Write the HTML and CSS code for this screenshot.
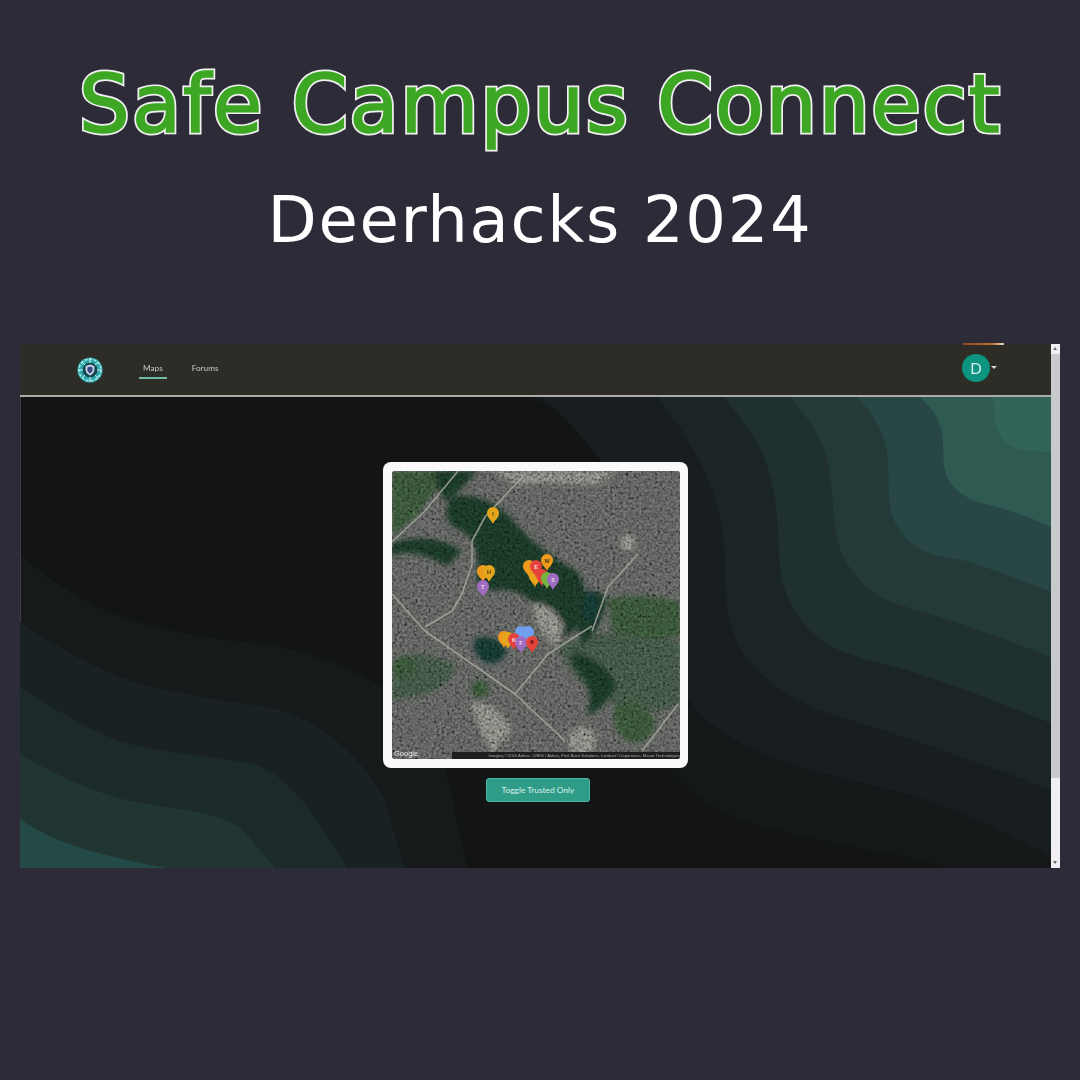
FILE: index.html
```html
<!DOCTYPE html>
<html lang="en">
<head>
<meta charset="utf-8">
<title>Safe Campus Connect</title>
<link rel="stylesheet" href="styles.css">
</head>
<body>
<header class="hero">
  <h1 class="title" data-text="Safe Campus Connect">Safe Campus Connect</h1>
  <h2 class="subtitle">Deerhacks 2024</h2>
</header>
<section class="window">
  <span class="sliver"></span>
  <div class="page">
    <nav class="nav">
      <svg class="logo" viewBox="0 0 26 26" aria-hidden="true">
        <circle cx="13" cy="13" r="12.6" fill="#2fa9ad"/>
        <circle cx="13" cy="13" r="11" fill="none" stroke="#bdeeee" stroke-width="1.3" stroke-dasharray="3 1.6"/>
        <circle cx="13" cy="13" r="7.6" fill="#15484f"/>
        <path d="M13 1.5V6M13 20v4.5M1.5 13H6M20 13h4.500M5 5l3 3M18 18l3 3M21 5l-3 3M8 18l-3 3" stroke="#d2f4f2" stroke-width="1"/>
        <path d="M13 7.400l4.400 1.600v3.600c0 3-2 4.900-4.400 6-2.400-1.100-4.400-3-4.400-6V9z" fill="#c9cfe6"/>
        <path d="M13 9.400l2.600 1v2.300c0 1.800-1.200 3-2.600 3.700-1.400-.7-2.600-1.900-2.600-3.700v-2.300z" fill="#3f4a82"/>
      </svg>
      <div class="links">
        <a class="link active">Maps</a>
        <a class="link">Forums</a>
      </div>
      <div class="account">
        <span class="avatar">D</span>
        <span class="caret"></span>
      </div>
    </nav>
    <main class="content">
      <svg class="waves" viewBox="0 0 1031 471" preserveAspectRatio="none" aria-hidden="true">
        <g>
          <path class="r8" d="M510,0 L640,65 L640,330 Q640,360 653,376 Q680,405 720,423 Q800,445 887,460 L927,471 H1031 V0Z"/>
          <path class="r7" d="M520,0 C570,40 625,110 640,200 C650,270 640,290 668,300 C690,340 750,362 820,381 C880,394 937,406 1031,460 V0Z"/>
          <path class="r6" d="M637,0 C665,35 700,85 704,150 C708,210 700,245 753,287 C785,312 820,320 853,330 C915,350 975,372 1031,393 V0Z"/>
          <path class="r5" d="M703,0 C725,25 751,55 756,110 C762,165 752,195 793,237 C820,260 855,263 887,273 C935,288 985,308 1031,326 V0Z"/>
          <path class="r4" d="M770,0 C790,24 807,45 811,85 C816,130 810,155 847,190 C868,208 895,212 920,220 C960,233 995,246 1031,260 V0Z"/>
          <path class="r3" d="M837,0 C852,18 866,32 868,65 C870,95 862,125 897,150 C915,162 935,160 953,166 C980,175 1005,184 1031,195 V0Z"/>
          <path class="r2" d="M900,0 C912,12 922,22 923,45 C924,65 920,85 947,100 C960,108 975,108 987,113 C1003,118 1018,124 1031,130 V0Z"/>
          <path class="r1" d="M973,0 C975,20 972,38 993,50 C1005,54 1020,54 1031,56 V0Z"/>
          <path class="l1" d="M0,158 C25,178 60,206 105,221 C147,236 197,242 247,248 C290,255 330,270 363,290 C395,315 420,350 427,376 L447,471 H0Z"/>
          <path class="l2" d="M0,225 C30,245 80,276 122,287 C163,298 205,304 247,310 C290,318 335,350 363,400 L385,471 H0Z"/>
          <path class="l3" d="M0,290 C30,310 80,340 113,348 C147,356 190,360 230,366 C265,375 295,415 327,471 H0Z"/>
          <path class="l4" d="M0,357 C30,375 80,400 122,406 C163,413 195,415 220,430 L255,471 H0Z"/>
          <path class="l5" d="M0,422 C25,440 63,456 147,471 H0Z"/>
        </g>
      </svg>
      <div class="card">
        <div class="map">
          <svg class="map-art" viewBox="0 0 288 288" aria-hidden="true">
            <defs>
              <filter id="grain" x="0" y="0" width="100%" height="100%">
                <feTurbulence type="fractalNoise" baseFrequency="0.38" numOctaves="4" seed="7"/>
                <feColorMatrix type="matrix" values="1 1 0 0 -0.400  1 1 0 0 -0.400  1 1 0 0 -0.400  0 0 0 0 1"/>
                <feGaussianBlur stdDeviation="0.6"/>
              </filter>
              <filter id="soft"><feGaussianBlur stdDeviation="2.500"/></filter>
              <filter id="tiny"><feGaussianBlur stdDeviation="0.5"/></filter>
              <path id="pin" d="M0,10 C-1.500,6 -6,4 -6,-1 A6,6 0 1 1 6,-1 C6,4 1.500,6 0,10Z"/>
            </defs>
            <rect class="ground" width="288" height="288"/>
            <g filter="url(#soft)">
              <path class="forest" d="M60,25 Q100,20 130,60 Q155,85 185,100 Q200,125 190,150 Q175,170 160,165 L140,130 Q120,115 100,120 L85,115 Q90,70 70,60 Q45,50 60,25Z"/>
              <path class="meadow" d="M0,0 H62 Q40,20 25,45 L0,65Z"/>
              <path class="forest" d="M0,72 Q40,60 70,80 L55,95 Q20,75 0,85Z"/>
              <path class="forest" d="M40,0 H85 Q70,20 52,30Z"/>
              <path class="wood" d="M165,175 Q220,150 288,172 V232 Q255,250 222,232 Q190,225 165,175Z"/>
              <path class="wood" d="M0,190 Q30,175 65,195 Q50,225 20,225 L0,230Z"/>
              <path class="water" d="M82,168 Q100,160 115,178 Q112,194 95,192 Q80,186 82,168Z"/>
              <path class="forest" d="M180,180 Q215,190 225,215 Q210,240 195,245 Q205,215 180,195Z"/>
              <path class="forest" d="M180,130 Q205,110 215,130 Q205,165 190,175Z"/>
              <path class="water" d="M196,118 Q210,125 205,150 Q195,160 190,140Z"/>
              <path class="meadow" d="M216,128 Q250,120 288,132 V166 Q250,170 220,160Z"/>
              <path class="meadow" d="M222,236 Q245,225 264,250 Q262,270 240,272 Q220,265 222,236Z"/>
              <circle class="meadow" cx="12" cy="196" r="11"/>
              <circle class="meadow" cx="88" cy="218" r="9"/>
              <path class="pale" d="M100,0 H225 L205,14 Q150,10 125,14Z"/>
              <path class="pale" d="M140,133 Q160,130 172,155 L165,175 Q145,165 140,133Z"/>
              <circle class="pale" cx="190" cy="270" r="14"/>
              <circle class="pale" cx="236" cy="72" r="8"/>
              <path class="pale" d="M78,232 Q105,228 120,260 L100,282 Q88,260 78,232Z"/>
            </g>
            <rect class="grain" width="288" height="288" filter="url(#grain)"/>
            <g class="roads" filter="url(#tiny)">
              <path d="M133,3 L93,46 L80,70 L80,93 L70,123 L60,140 L33,156"/>
              <path d="M66,0 L33,40 L0,71"/>
              <path d="M0,123 L33,160 L123,223 L173,270"/>
              <path d="M200,155 L156,183 L123,223"/>
              <path d="M246,83 L216,116 L200,160"/>
              <path d="M286,233 L250,280"/>
              <path class="thin" d="M190,16 L246,76"/>
              <path class="thin" d="M8,28 L50,70"/>
            </g>
            <g filter="url(#tiny)">
              <use href="#pin" class="gold" x="101" y="43"/>
              <use href="#pin" class="orange" x="91" y="101"/>
              <use href="#pin" class="gold" x="97" y="101"/>
              <use href="#pin" class="purple" x="91" y="116"/>
              <use href="#pin" class="orange" x="155" y="90"/>
              <use href="#pin" class="orange" x="137" y="96"/>
              <use href="#pin" class="gold" x="143" y="106"/>
              <use href="#pin" class="red" x="144" y="96"/>
              <use href="#pin" class="red" x="150" y="105"/>
              <use href="#pin" class="green" x="155" y="108"/>
              <use href="#pin" class="purple" x="161" y="109"/>
              <use href="#pin" class="blue" x="129" y="162"/>
              <use href="#pin" class="blue" x="136" y="162"/>
              <use href="#pin" class="orange" x="112" y="167"/>
              <use href="#pin" class="gold" x="116" y="168"/>
              <use href="#pin" class="red" x="122" y="169"/>
              <use href="#pin" class="purple" x="129" y="172"/>
              <use href="#pin" class="red" x="140" y="172"/>
              <circle class="hole" cx="140" cy="171" r="2"/>
              <text class="pin-label" x="101" y="45">I</text>
              <text class="pin-label" x="97" y="103">H</text>
              <text class="pin-label pale-label" x="91" y="118">T</text>
              <text class="pin-label" x="155" y="92">W</text>
              <text class="pin-label pale-label" x="144" y="98">E</text>
              <text class="pin-label pale-label" x="161" y="111">S</text>
              <text class="pin-label pale-label" x="122" y="171">K</text>
              <text class="pin-label pale-label" x="129" y="174">F</text>
            </g>
          </svg>
          <span class="brand">Google</span>
          <span class="credit">Imagery ©2024 Airbus, CNES / Airbus, First Base Solutions, Landsat / Copernicus, Maxar Technologies</span>
        </div>
      </div>
      <button class="toggle">Toggle Trusted Only</button>
    </main>
  </div>
  <aside class="scrollbar">
    <span class="arrow up"></span>
    <span class="thumb"></span>
    <span class="arrow down"></span>
  </aside>
</section>
</body>
</html>
```
FILE: styles.css
```css
* { box-sizing: border-box; }
html, body { margin: 0; height: 100%; }
body {
  background: #2d2b38;
  width: 1080px;
  height: 1080px;
  overflow: hidden;
  font-family: "DejaVu Sans", sans-serif;
}
.hero {
  height: 344px;
  padding-top: 55px;
  text-align: center;
}
.title {
  position: relative;
  z-index: 0;
  margin: 0;
  padding-left: 1px;
  font-size: 80px;
  line-height: 100px;
  font-weight: 400;
  letter-spacing: 2px;
  color: #3da724;
  -webkit-text-stroke: 1.600px #3da724;
}
.title::before {
  content: attr(data-text);
  position: absolute;
  z-index: -1;
  left: 1px;
  right: 0;
  top: 0;
  -webkit-text-stroke: 5px #f0f0f0;
}
.subtitle {
  margin: 25px 0 0;
  font-size: 64px;
  line-height: 80px;
  font-weight: 400;
  letter-spacing: 1.650px;
  color: #fff;
}
.window {
  position: relative;
  width: 1040px;
  height: 524px;
  margin-left: 20px;
  display: flex;
  filter: blur(0.4px);
}
.sliver {
  position: absolute;
  top: -1px;
  left: 943px;
  width: 41px;
  height: 2px;
  background: linear-gradient(90deg, #8a4a1e, #c06a2a 70%, #e6d8c8);
}
.page {
  width: 1031px;
  display: flex;
  flex-direction: column;
}
.nav {
  height: 53px;
  flex: none;
  background: #2d2c27;
  border-bottom: 2px solid #a9aca8;
  display: flex;
  align-items: center;
  padding: 0 54px 3px 57px;
}
.logo { width: 26px; height: 26px; flex: none; margin-top: 3px; }
.links {
  display: flex;
  gap: 21px;
  margin-left: 36px;
  font-family: Lato, sans-serif;
  font-size: 8.200px;
  color: #c9c9c4;
}
.link {
  position: relative;
  padding: 0 4px;
}
.link.active::after {
  content: "";
  position: absolute;
  left: 0;
  right: 0;
  bottom: -6px;
  height: 2px;
  background: #6fb9a5;
}
.account {
  margin-left: auto;
  display: flex;
  align-items: center;
  gap: 1px;
}
.avatar {
  width: 28px;
  height: 28px;
  border-radius: 50%;
  background: #0e9480;
  color: #d6f2ec;
  font-family: Lato, sans-serif;
  font-size: 15px;
  display: flex;
  align-items: center;
  justify-content: center;
}
.caret {
  width: 0;
  height: 0;
  margin-top: -2px;
  border-left: 3px solid transparent;
  border-right: 3px solid transparent;
  border-top: 3px solid #d8d8d8;
}
.content {
  position: relative;
  flex: 1;
  background: #131515;
  display: flex;
  flex-direction: column;
  align-items: center;
  padding-top: 65px;
  overflow: hidden;
}
.content::before {
  content: "";
  position: absolute;
  z-index: 1;
  left: 0;
  top: 0;
  width: 1px;
  height: 225px;
  background: #3a3d45;
}
.waves {
  position: absolute;
  inset: 0;
  width: 100%;
  height: 100%;
}
.r8 { fill: #151819; }
.r7 { fill: #181d1f; }
.r6 { fill: #1b2527; }
.r5 { fill: #20302f; }
.r4 { fill: #243a38; }
.r3 { fill: #284644; }
.r2 { fill: #2e5a52; }
.r1 { fill: #33645a; }
.l1 { fill: #161a1b; }
.l2 { fill: #1a2122; }
.l3 { fill: #1d2a2a; }
.l4 { fill: #213533; }
.l5 { fill: #234a46; }
.card {
  position: relative;
  width: 305px;
  height: 306px;
  padding: 9px 8px 8px 9px;
  background: #fbfafa;
  border-radius: 8px;
}
.map {
  position: relative;
  width: 288px;
  height: 288px;
  border-radius: 3px;
  overflow: hidden;
  background: #5b5f5c;
}
.map-art { display: block; width: 288px; height: 288px; }
.ground { fill: #7d7f7c; }
.forest { fill: #234a33; }
.wood { fill: #566f5a; }
.meadow { fill: #4a6e48; }
.water { fill: #1e4a42; }
.pale { fill: #b0b0a8; }
.grain { mix-blend-mode: multiply; }
.roads path {
  fill: none;
  stroke: #a4a69e;
  stroke-width: 1.600;
  stroke-linejoin: round;
  opacity: 0.85;
}
.roads .thin { stroke-width: 0.8; stroke: #8e908a; opacity: 0.6; }
.gold { fill: #e5a61f; }
.orange { fill: #ee9a1c; }
.red { fill: #e5433a; }
.green { fill: #74b43c; }
.purple { fill: #a06cc2; }
.blue { fill: #6f9ff0; }
.hole { fill: #8a1f1a; }
.pin-label {
  font-family: "Liberation Sans", sans-serif;
  font-size: 5.500px;
  font-weight: 700;
  fill: #4a3410;
  text-anchor: middle;
}
.pale-label { fill: #f4dfe6; }
.brand {
  position: absolute;
  left: 2px;
  bottom: 1px;
  font-family: "Liberation Sans", sans-serif;
  font-size: 7.500px;
  line-height: 9px;
  color: #e8e8e8;
}
.credit {
  position: absolute;
  right: 0;
  bottom: 0;
  width: 228px;
  height: 7px;
  background: #1d1f1f;
  color: #a9aaa8;
  font-family: "Liberation Sans", sans-serif;
  font-size: 4.200px;
  line-height: 7px;
  text-align: right;
  white-space: nowrap;
  overflow: hidden;
}
.toggle {
  position: relative;
  width: 104px;
  height: 24px;
  margin: 10px 0 0 5px;
  padding: 0;
  background: #2f9c88;
  border: 1px solid #52b5a2;
  border-radius: 3px;
  color: #d9efea;
  font-family: Lato, sans-serif;
  font-size: 8.400px;
}
.scrollbar {
  width: 9px;
  display: flex;
  flex-direction: column;
  background: #f0f0f3;
}
.thumb {
  height: 424px;
  background: #c7c9ca;
}
.arrow {
  height: 10px;
  flex: none;
  position: relative;
}
.arrow::after {
  content: "";
  position: absolute;
  left: 2px;
  top: 3px;
  border-left: 2.500px solid transparent;
  border-right: 2.500px solid transparent;
}
.up::after { border-bottom: 3px solid #6a6a6a; }
.down { margin-top: auto; }
.down::after { border-top: 3px solid #6a6a6a; }
```
